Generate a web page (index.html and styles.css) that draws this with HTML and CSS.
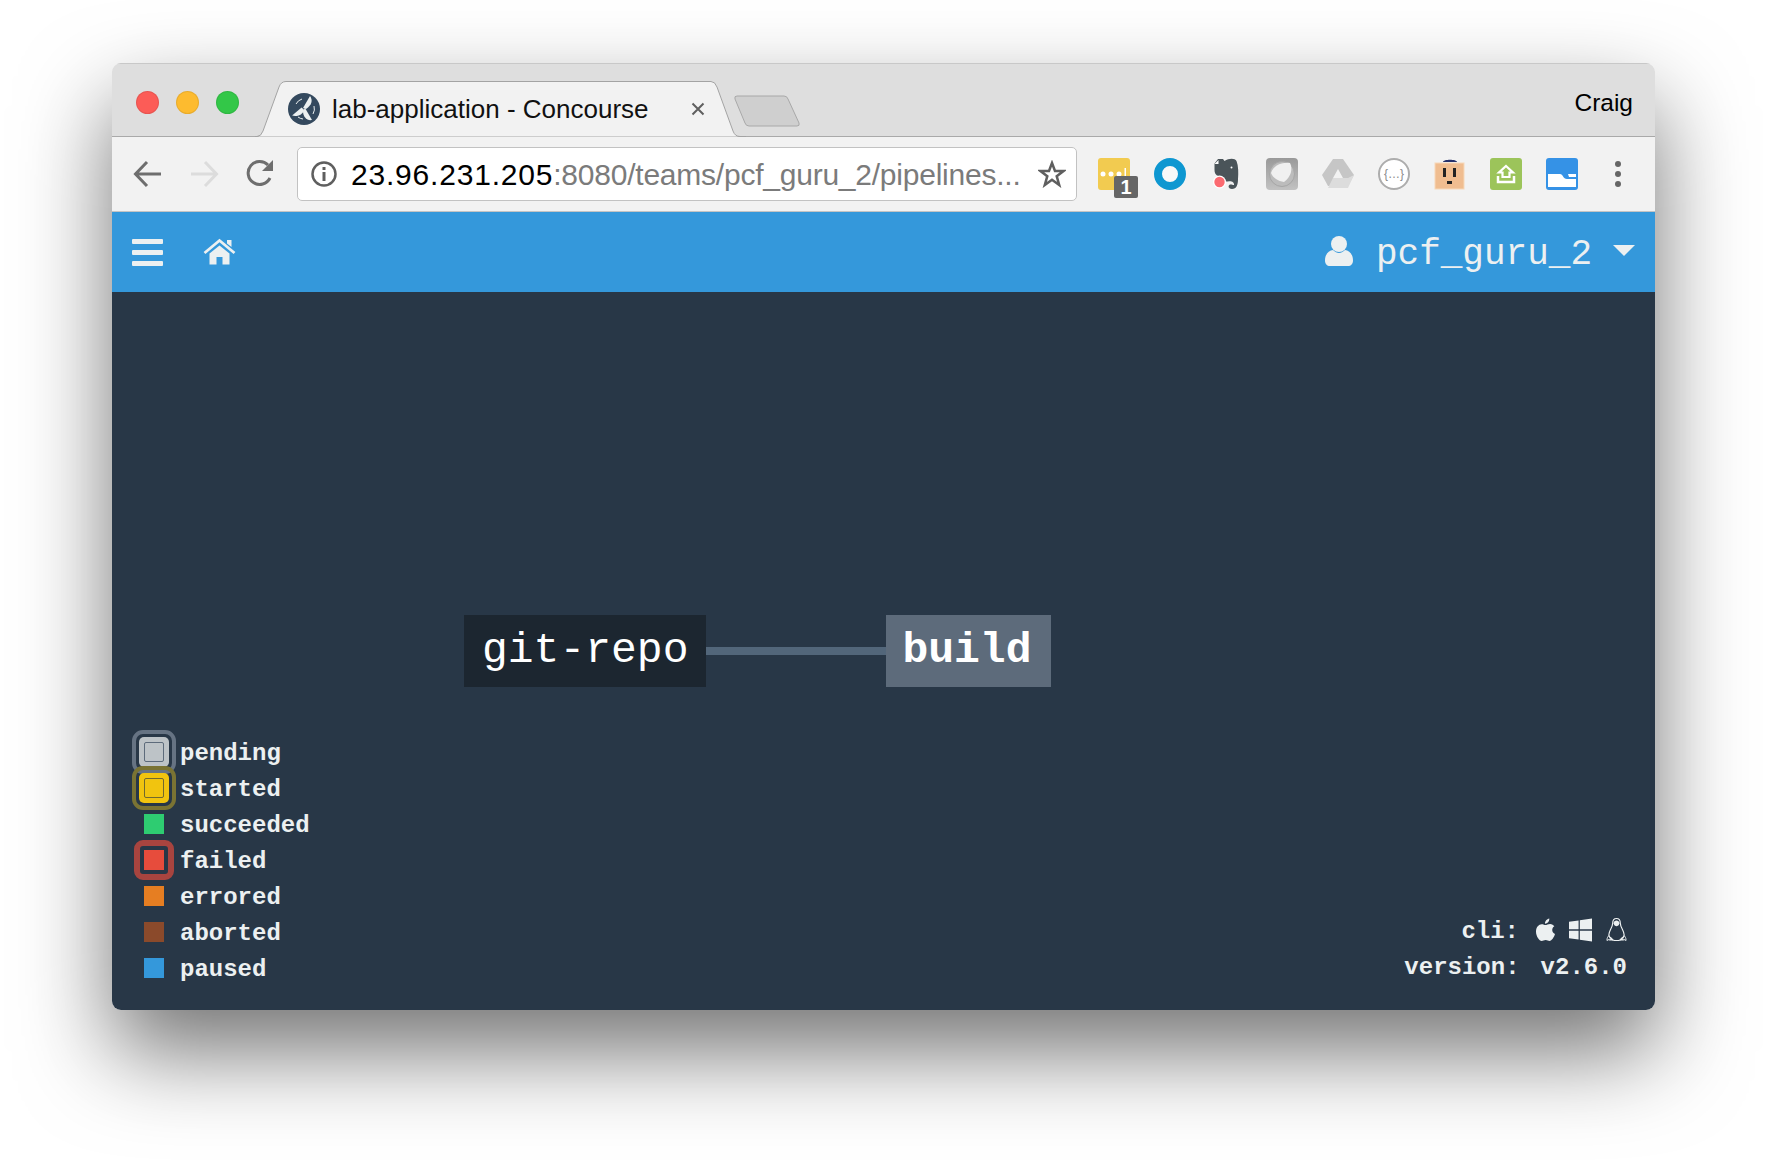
FILE: index.html
```html
<!DOCTYPE html>
<html lang="en">
<head>
    <meta charset="UTF-8">
    <title>lab-application - Concourse</title>
    <link rel="stylesheet" href="styles.css">
</head>
<body>
    <div class="window">
        <div class="tabstrip">
            <div class="lights">
                <span class="light red"></span>
                <span class="light yellow"></span>
                <span class="light green"></span>
            </div>
            <div class="tab">
                <svg class="tab-shape" viewBox="0 0 491 56"><path d="M0 55.5H2Q6 55.5 8 50L24 6Q26 .5 31 .5H456Q460 .5 462 6L478 50Q480 55.5 485 55.5H491" fill="#f2f2f2" stroke="#a3a3a3"/></svg>
                <svg class="favicon" viewBox="0 0 32 32">
                    <circle cx="16" cy="16" r="16" fill="#34495e"/>
                    <path d="M15 15L22 3C25 7 24 12 18 16Z" fill="#ecf0f1"/>
                    <path d="M14 14L3 20C7 22 13 22 16 17Z" fill="#ecf0f1" transform="rotate(-12 16 16)"/>
                    <path d="M17 15L24 27C19 28 15 24 15 18Z" fill="#ecf0f1"/>
                    <path d="M8 11A10 10 0 0 1 14 6M26 13A10 10 0 0 1 25 21M10 24A10 10 0 0 0 15 26" fill="none" stroke="#ecf0f1" stroke-width="1"/>
                </svg>
                <span class="tab-title">lab-application - Concourse</span>
                <svg class="tab-close" viewBox="0 0 14 14"><path d="M1.5 1.5L12.5 12.5M12.5 1.5L1.5 12.5" stroke="#5f5f5f" stroke-width="2"/></svg>
            </div>
            <svg class="new-tab" viewBox="0 0 66 32"><path d="M3 1H50Q53 1 54 4L65 28Q66 31 63 31H15Q12 31 11 28L1 4Q0 1 3 1Z" fill="#cfcfcf" stroke="#a8a8a8"/></svg>
            <span class="profile">Craig</span>
        </div>

        <div class="toolbar">
            <svg class="nav-btn" viewBox="0 0 32 32"><path d="M29 16H5M15 4L3.500 16L15 28" fill="none" stroke="#6e6e6e" stroke-width="3"/></svg>
            <svg class="nav-btn" viewBox="0 0 32 32"><path d="M3 16H27M17 4L28.500 16L17 28" fill="none" stroke="#dcdcdc" stroke-width="3"/></svg>
            <svg class="nav-btn" viewBox="0 0 32 32"><path d="M26 20A11.500 11.500 0 1 1 24 7" fill="none" stroke="#6e6e6e" stroke-width="3"/><path d="M18 13L29 13V2Z" fill="#6e6e6e"/></svg>

            <div class="omnibox">
                <svg class="info" viewBox="0 0 26 26"><circle cx="13" cy="13" r="11.500" fill="none" stroke="#5f5f5f" stroke-width="2.500"/><path d="M11.500 11H14.500V20H11.500ZM11.500 6H14.500V9H11.500Z" fill="#5f5f5f"/></svg>
                <span class="url"><span class="host">23.96.231.205</span>:8080/teams/pcf_guru_2/pipelines...</span>
                <svg class="star" viewBox="0 0 28 28"><path d="M14 3L17 11H25.500L18.700 16.200L21.200 25L14 19.800L6.800 25L9.300 16.200L2.500 11H11Z" fill="none" stroke="#5f5f5f" stroke-width="2.500"/></svg>
            </div>

            <div class="extensions">
                <div class="ext">
                    <svg viewBox="0 0 32 32"><rect width="32" height="32" rx="3" fill="#f2cb50"/><circle cx="5" cy="16" r="2.500" fill="#fff"/><circle cx="13" cy="16" r="2.500" fill="#fff"/><circle cx="21" cy="16" r="2.500" fill="#fff"/><rect x="26.500" y="10" width="1.500" height="11" fill="#fff"/></svg>
                    <span class="ext-badge">1</span>
                </div>
                <div class="ext">
                    <svg viewBox="0 0 32 32"><circle cx="16" cy="16" r="12" fill="#f8f8f8" stroke="#0e97d1" stroke-width="8"/></svg>
                </div>
                <div class="ext">
                    <svg viewBox="0 0 32 32"><path d="M8 1H13L14.500 3C19 0 25 0 26.500 3C28.500 8 28.500 15 28 21C28 27 26.500 31 22 31C18.500 31 17.500 27.500 20 26.500C22 26 23 27.500 24 27C24.500 24 21 22.500 18 23.500C14 24 12 22 11.500 18.500C8 18.500 4.500 17 4.500 12V5.500Z" fill="#4a5459"/><path d="M8.500 2V6H4.500Z" fill="#fff"/><circle cx="21.500" cy="9.500" r="1" fill="#fff"/><circle cx="9.500" cy="24" r="6.500" fill="#fff"/><circle cx="9.500" cy="24" r="5.200" fill="#fb6a70"/></svg>
                </div>
                <div class="ext">
                    <svg viewBox="0 0 32 32"><defs><linearGradient id="greyTile" x1="0" y1="0" x2="0" y2="1"><stop offset="0" stop-color="#999"/><stop offset="1" stop-color="#c2c2c2"/></linearGradient></defs><rect width="32" height="32" rx="4" fill="url(#greyTile)"/><circle cx="16" cy="16" r="12.500" fill="#bcbcbc" stroke="#a6a6a6"/><path d="M5 15C7 8 15 4 24 5C27 11 25 19 18 24C12 23 7 20 5 15Z" fill="#f0f0f0"/></svg>
                </div>
                <div class="ext">
                    <svg viewBox="0 0 32 32"><path d="M11 1H21L32 17L26 28H6L0 17ZM16 11L11 20H21Z" fill="#c6c6c6" fill-rule="evenodd"/><path d="M6 30L11 20H26L32 17L26 30Z" fill="#dcdcdc"/></svg>
                </div>
                <div class="ext">
                    <span class="json-ext">{…}</span>
                </div>
                <div class="ext">
                    <svg viewBox="0 0 32 32"><path d="M9 4C9 1 23 1 23 4Z" fill="#26316b"/><rect x="1" y="5" width="29" height="26" fill="#f0bd90" stroke="#f7d8b8"/><rect x="9" y="10" width="3" height="9" fill="#222"/><rect x="19" y="10" width="3" height="9" fill="#222"/><rect x="13" y="23" width="5" height="3" fill="#222"/></svg>
                </div>
                <div class="ext">
                    <svg viewBox="0 0 32 32"><rect width="32" height="32" rx="3" fill="#9cc45a"/><path d="M16 8L23 14.500H19.500V19H12.500V14.500H9Z" fill="none" stroke="#fff" stroke-width="2.200"/><path d="M8 18V24H24V18" fill="none" stroke="#fff" stroke-width="2.500"/></svg>
                </div>
                <div class="ext">
                    <svg viewBox="0 0 32 32"><rect width="32" height="32" rx="3" fill="#3592e6"/><path d="M2 16H14C17 16 17 21 21 21H30V29H2Z" fill="#fff"/><path d="M22 16H30V19H23Z" fill="#fff"/></svg>
                </div>
            </div>
            <div class="more">
                <span></span><span></span><span></span>
            </div>
        </div>

        <nav class="navbar">
            <span class="burger"><span></span><span></span><span></span></span>
            <svg class="home" viewBox="0 0 33 27"><path d="M1.500 15L16.500 2.500L31.500 15" fill="none" stroke="#ecf0f1" stroke-width="2.800"/><path d="M24 2H28.500V9L24 5.500Z" fill="#ecf0f1"/><path d="M6.500 15.500L16.500 7.500L26.500 15.500V26.500H19.500V19H13.500V26.500H6.500Z" fill="#ecf0f1"/></svg>
            <div class="user">
                <svg class="user-icon" viewBox="0 0 28 30"><circle cx="14" cy="8" r="8"/><path d="M0 24.500C0 18 4 14.500 8 14C10 16 12 17 14 17C16 17 18 16 20 14C24 14.500 28 18 28 24.500C28 28 26 30 23 30H5C2 30 0 28 0 24.500Z"/></svg>
                <span class="user-name">pcf_guru_2</span>
                <span class="caret"></span>
            </div>
        </nav>

        <main class="stage">
            <div class="pipeline">
                <div class="node node-resource">git-repo</div>
                <div class="connector"></div>
                <div class="node node-job">build</div>
            </div>

            <ul class="legend">
                <li><span class="swatch pending"></span>pending</li>
                <li><span class="swatch started"></span>started</li>
                <li><span class="swatch succeeded"></span>succeeded</li>
                <li><span class="swatch failed"></span>failed</li>
                <li><span class="swatch errored"></span>errored</li>
                <li><span class="swatch aborted"></span>aborted</li>
                <li><span class="swatch paused"></span>paused</li>
            </ul>

            <div class="info-box">
                <div class="info-row">
                    <span class="cli-label">cli:</span>
                    <svg class="os apple" viewBox="0 0 20 24"><path d="M14 0C14.200 3 12 5.500 9.500 5.500C9.200 3 11.500 .4 14 0ZM10 6.800C11.200 6.800 12.800 5.700 14.800 5.700C16.800 5.800 18.400 6.700 19.300 8.100C16 10.100 16.600 14.800 20 16.200C19 19.500 16.500 23.500 14.300 23.500C12.800 23.500 12 22.600 10.200 22.600C8.300 22.600 7.400 23.500 6 23.500C3.500 23.500 0 18.500 0 13.800C0 9 3 6 6 6C7.800 6 9 6.800 10 6.800Z"/></svg>
                    <svg class="os windows" viewBox="0 0 24 24"><path d="M0 3.500L10 2.100V11.300H0ZM11.300 1.900L24 0V11.300H11.300ZM0 12.700H10V22L0 20.600ZM11.300 12.700H24V24L11.300 22.200Z"/></svg>
                    <svg class="os linux" viewBox="0 0 22 26"><path d="M11 1C14 1 15 3 15 6C15 10 19 14 19 18C19 20 18 21 17 21C16 23 14 24 11 24C8 24 6 23 5 21C4 21 3 20 3 18C3 14 7 10 7 6C7 3 8 1 11 1Z" fill="none" stroke="#ecf0f1" stroke-width="1.200"/><path d="M8 6C8 2 14 2 14 6C14 8 12 9 11 9C10 9 8 8 8 6Z"/><path d="M5 22L1 24C1 21 2 20 3 19ZM17 22L21 24C21 21 20 20 19 19Z" fill="none" stroke="#ecf0f1"/><path d="M3 24H8L6 21ZM14 24H19L16 21Z"/></svg>
                </div>
                <div class="info-row version">
                    <span>version:</span>
                    <span>v2.6.0</span>
                </div>
            </div>
        </main>
    </div>
</body>
</html>
```

FILE: styles.css
```css
html, body {
    height: 100%;
}

body {
    margin: 0;
    padding: 63px 0 0 112px;
    box-sizing: border-box;
    background: #fff;
    overflow: hidden;
    font-family: "Liberation Sans", Arial, sans-serif;
}

.window {
    width: 1543px;
    height: 947px;
    display: flex;
    flex-direction: column;
    border-radius: 9px;
    overflow: hidden;
    box-shadow: 0 42px 90px rgba(0, 0, 0, 0.55);
}

/* browser chrome */
.tabstrip {
    height: 74px;
    flex: none;
    display: flex;
    align-items: flex-end;
    box-sizing: border-box;
    background: #dedede;
    border-top: 1px solid #c8c8c8;
    border-bottom: 1px solid #a9a9a9;
    padding-left: 24px;
}

.lights {
    align-self: flex-start;
    display: flex;
    gap: 17px;
    padding-top: 27px;
}

.light {
    width: 23px;
    height: 23px;
    border-radius: 50%;
    box-sizing: border-box;
    border: 1px solid rgba(0, 0, 0, 0.08);
}

.red { background: #fc5c57; }
.yellow { background: #fdbb2f; }
.green { background: #33c748; }

.tab {
    position: relative;
    width: 491px;
    height: 56px;
    margin-left: 16px;
    margin-bottom: -1px;
    display: flex;
    align-items: center;
    padding: 0 41px 0 33px;
    box-sizing: border-box;
}

.tab-shape {
    position: absolute;
    left: 0;
    top: 0;
    width: 491px;
    height: 56px;
}

.favicon {
    position: relative;
    width: 32px;
    height: 32px;
    flex: none;
}

.tab-title {
    position: relative;
    margin-left: 12px;
    font-size: 26px;
    color: #111;
    white-space: nowrap;
    flex: 1;
}

.tab-close {
    position: relative;
    width: 14px;
    height: 14px;
    flex: none;
}

.new-tab {
    width: 66px;
    height: 32px;
    margin-left: -12px;
    margin-bottom: 9px;
    flex: none;
}

.profile {
    align-self: flex-start;
    margin-left: auto;
    padding: 25px 22px 0 0;
    font-size: 24.500px;
    line-height: 28px;
    color: #000;
}

.toolbar {
    height: 75px;
    flex: none;
    display: flex;
    align-items: center;
    gap: 24px;
    box-sizing: border-box;
    background: #f2f2f2;
    border-bottom: 1px solid #c4c4c4;
    padding-left: 20px;
}

.nav-btn {
    width: 32px;
    height: 32px;
    flex: none;
}

.omnibox {
    width: 780px;
    height: 54px;
    flex: none;
    margin-left: -3px;
    margin-right: -3px;
    display: flex;
    align-items: center;
    box-sizing: border-box;
    background: #fff;
    border: 1px solid #c2c2c2;
    border-radius: 5px;
    padding: 0 10px 0 13px;
}

.info {
    width: 26px;
    height: 26px;
    flex: none;
}

.url {
    flex: 1;
    margin-left: 14px;
    padding-top: 2px;
    font-size: 30px;
    letter-spacing: -0.230px;
    color: #7b7b7b;
    white-space: nowrap;
    overflow: hidden;
}

.host {
    color: #000;
    letter-spacing: 0.800px;
}

.star {
    width: 28px;
    height: 28px;
    flex: none;
}

.extensions {
    display: flex;
    gap: 24px;
}

.ext {
    position: relative;
    width: 32px;
    height: 32px;
}

.ext svg {
    display: block;
    width: 32px;
    height: 32px;
}

.ext-badge {
    position: absolute;
    left: 16px;
    top: 18px;
    width: 24px;
    height: 22px;
    border-radius: 2px;
    background: #666;
    color: #fff;
    font-size: 20px;
    font-weight: bold;
    line-height: 22px;
    text-align: center;
}

.json-ext {
    display: block;
    width: 32px;
    height: 32px;
    box-sizing: border-box;
    border: 2px solid #adadad;
    border-radius: 50%;
    background: #fff;
    color: #8a8a8a;
    font-size: 12px;
    line-height: 28px;
    text-align: center;
}

.more {
    width: 32px;
    display: flex;
    flex-direction: column;
    align-items: center;
    gap: 4px;
}

.more span {
    width: 6px;
    height: 6px;
    border-radius: 50%;
    background: #666;
}

/* app */
.navbar {
    height: 80px;
    flex: none;
    display: flex;
    align-items: center;
    background: #3498db;
    padding: 0 20px 0 20px;
    box-sizing: border-box;
    color: #ecf0f1;
}

.burger {
    width: 31px;
    display: flex;
    flex-direction: column;
    gap: 6px;
}

.burger span {
    height: 5px;
    border-radius: 1px;
    background: #ecf0f1;
}

.home {
    width: 33px;
    height: 27px;
    margin-left: 40px;
    margin-bottom: 2px;
}

.user {
    margin-left: auto;
    display: flex;
    align-items: center;
}

.user-icon {
    width: 28px;
    height: 30px;
    fill: #ecf0f1;
    margin-bottom: 3px;
}

.user-name {
    margin-left: 23px;
    padding-top: 5px;
    font-family: "Liberation Mono", "Courier New", monospace;
    font-size: 36px;
}

.caret {
    margin-left: 21px;
    margin-bottom: 3px;
    border-left: 11px solid transparent;
    border-right: 11px solid transparent;
    border-top: 11px solid #ecf0f1;
}

.stage {
    position: relative;
    flex: 1;
    display: flex;
    justify-content: space-between;
    align-items: flex-end;
    background: #283747;
    padding: 0 28px 23px 32px;
    font-family: "Liberation Mono", "Courier New", monospace;
    font-size: 24px;
    font-weight: bold;
    color: #ecf0f1;
}

/* the pipeline graph sits on a free canvas */
.pipeline {
    position: absolute;
    left: 352px;
    top: 323px;
    display: flex;
    align-items: center;
    color: #fff;
    font-size: 43px;
}

.node {
    height: 72px;
    padding: 0 18px;
    line-height: 71px;
}

.node-resource {
    background: #1c2630;
    font-weight: normal;
}

.node-job {
    background: #5d6b7b;
    padding: 0 20px 0 16px;
}

.connector {
    width: 180px;
    height: 8px;
    background: #52667a;
}

.legend {
    list-style: none;
    margin: 0;
    padding: 0;
}

.legend li {
    height: 36px;
    display: flex;
    align-items: center;
    gap: 16px;
    isolation: isolate;
}

.swatch {
    position: relative;
    width: 20px;
    height: 20px;
    flex: none;
    box-sizing: border-box;
    margin-bottom: 2px;
}

/* pulsing states: a filled halo behind the swatch and a ring round it */
.pending::before,
.started::before {
    content: "";
    position: absolute;
    inset: -5px;
    z-index: -1;
    border-radius: 5px;
}

.pending::after,
.started::after,
.failed::after {
    content: "";
    position: absolute;
    inset: -12px;
    border: 4px solid;
    border-radius: 11px;
}

.pending {
    background: #bdc3c7;
    border: 1px solid #5d6b7b;
    border-radius: 2px;
}

.pending::before { inset: -6px; background: #bdc3c7; }
.pending::after { inset: -13px; border-color: #667383; }

.started {
    background: #f1c40f;
    border: 1px solid #70692e;
    border-radius: 2px;
}

.started::before { inset: -6px; background: #f1c40f; }
.started::after { inset: -13px; border-color: #7a7333; }

.succeeded { background: #2ecc71; }

.failed { background: #e74c3c; }

.failed::after {
    inset: -10px;
    border-width: 6px;
    border-color: #a8443f;
    border-radius: 9px;
}

.errored { background: #e67e22; }
.aborted { background: #8b4a2b; }
.paused { background: #3498db; }

.info-box {
    display: flex;
    flex-direction: column;
    margin-bottom: 2px;
}

.info-row {
    height: 36px;
    display: flex;
    align-items: center;
    justify-content: flex-end;
    gap: 14px;
}

.cli-label {
    margin-right: 3px;
}

.os {
    fill: #ecf0f1;
    height: 24px;
    margin-bottom: 3px;
}

.apple { width: 19px; }
.windows { width: 23px; }
.linux { width: 21px; height: 26px; }

.version {
    gap: 21px;
}
```
